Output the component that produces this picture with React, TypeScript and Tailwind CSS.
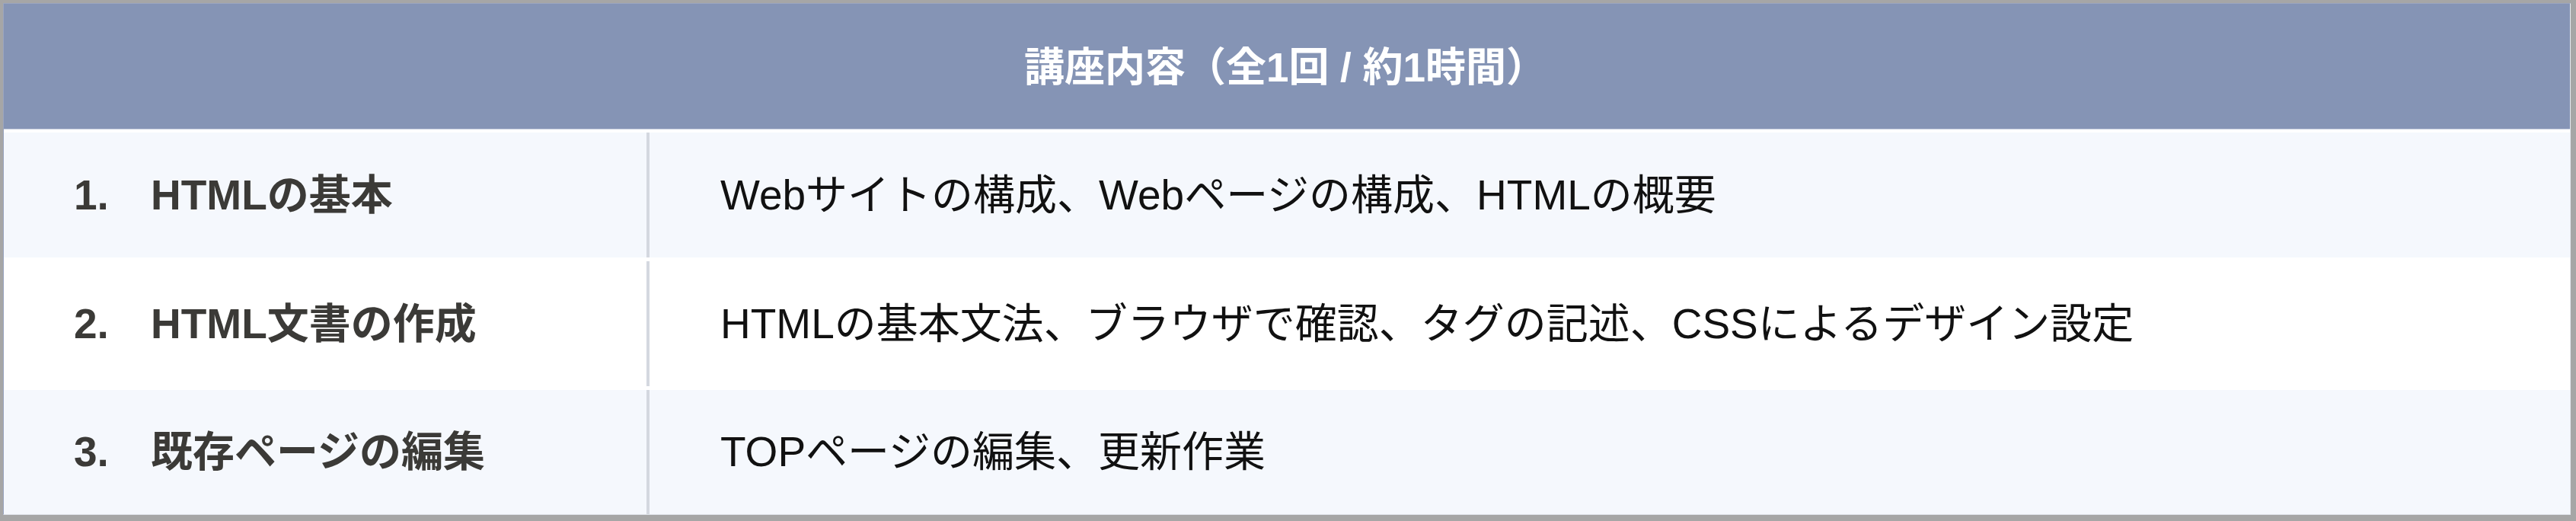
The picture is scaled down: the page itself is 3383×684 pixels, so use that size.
const rows = [
  {
    no: '1.',
    title: 'HTMLの基本',
    detail: 'Webサイトの構成、Webページの構成、HTMLの概要',
    bg: 'bg-[#f5f8fd]',
    height: 'h-[164px]',
    divider: 'my-0',
  },
  {
    no: '2.',
    title: 'HTML文書の作成',
    detail: 'HTMLの基本文法、ブラウザで確認、タグの記述、CSSによるデザイン設定',
    bg: 'bg-white',
    height: 'h-[174px]',
    divider: 'my-[5px]',
  },
  {
    no: '3.',
    title: '既存ページの編集',
    detail: 'TOPページの編集、更新作業',
    bg: 'bg-[#f5f8fd]',
    height: 'h-[163px]',
    divider: 'my-0',
  },
];

export default function App() {
  return (
    <div
      className="h-[684px] w-[3383px] border-t-4 border-r-[7px] border-b-[8px] border-l-4 border-[#a6a6a6] bg-white"
      style={{ fontFamily: '"Liberation Sans", "Noto Sans CJK JP", sans-serif' }}
    >
      <div className="flex h-full flex-col border border-[#9aa5c0] border-b-[#dfe3ea] border-r-[#e6e9ef]">
        <div className="flex h-[164px] items-center justify-center bg-[#8594b5] pt-[2px] pr-[4px] font-bold text-[53px] text-white leading-none">
          講座内容（全1回 / 約1時間）
        </div>
        <div className="h-px bg-[#c6cddd]" />
        <div className="h-[4px] bg-white" />

        {rows.map((row) => (
          <div key={row.no} className={`flex ${row.height} ${row.bg}`}>
            <div className="flex w-[844px] items-center pl-[92px] font-bold text-[#3b3a37] text-[55px] leading-none">
              <span className="w-[101px] shrink-0">{row.no}</span>
              <span>{row.title}</span>
            </div>
            <div className={`w-[4px] shrink-0 bg-[#d4d8e0] ${row.divider}`} />
            <div className="flex flex-1 items-center pl-[93px] text-[#111111] text-[55px] leading-none">
              {row.detail}
            </div>
          </div>
        ))}
      </div>
    </div>
  );
}
